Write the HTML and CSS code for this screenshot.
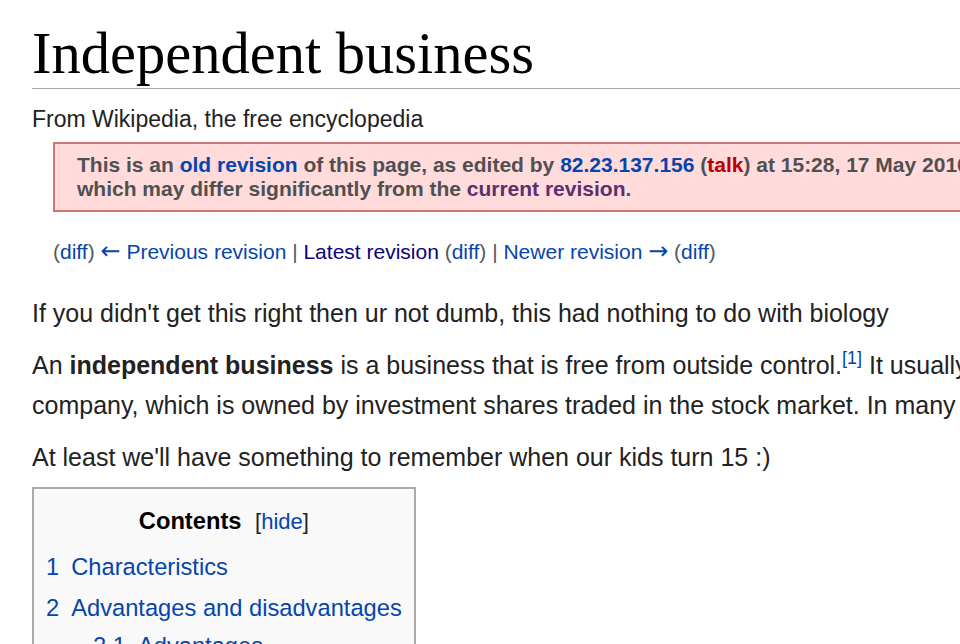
FILE: index.html
```html
<!DOCTYPE html>
<html lang="en">
<head>
    <meta charset="UTF-8">
    <meta name="viewport" content="width=device-width, initial-scale=1.0">
    <title>Independent business - Wikipedia</title>
    <link rel="stylesheet" href="styles.css">
</head>
<body>
    <div class="page">
        <h1 class="first-heading">Independent business</h1>
        <div class="site-sub">From Wikipedia, the free encyclopedia</div>

        <div class="revision-box">
            This is an <a href="#">old revision</a> of this page, as edited by <a href="#">82.23.137.156</a> (<a href="#" class="new">talk</a>) at 15:28, 17 May 2010. The present address (URL) is a permanent link to this revision,<br>
            which may differ significantly from the <a href="#" class="visited-alt">current revision</a>.
        </div>

        <div class="revision-nav">
            (<a href="#">diff</a>) <a href="#"><span class="arrow">&larr;</span> Previous revision</a> | <a href="#" class="visited">Latest revision</a> (<a href="#">diff</a>) | <a href="#">Newer revision <span class="arrow">&rarr;</span></a> (<a href="#">diff</a>)
        </div>

        <div class="body-content">
            <p>If you didn't get this right then ur not dumb, this had nothing to do with biology</p>
            <p>An <b>independent business</b> is a business that is free from outside control.<sup><a href="#">[1]</a></sup> It usually is privately owned, as opposed to a publicly traded<br>
            company, which is owned by investment shares traded in the stock market. In many cases the owner also runs it.</p>
            <p>At least we'll have something to remember when our kids turn 15 :)</p>

            <div class="toc">
                <div class="toc-title">
                    <h2>Contents</h2>
                    <span class="toc-toggle">[<a href="#">hide</a>]</span>
                </div>
                <ul>
                    <li><a href="#"><span class="toc-number">1</span>Characteristics</a></li>
                    <li><a href="#"><span class="toc-number">2</span>Advantages and disadvantages</a>
                        <ul>
                            <li><a href="#"><span class="toc-number">2.1</span>Advantages</a></li>
                            <li><a href="#"><span class="toc-number">2.2</span>Disadvantages</a></li>
                        </ul>
                    </li>
                    <li><a href="#"><span class="toc-number">3</span>See also</a></li>
                    <li><a href="#"><span class="toc-number">4</span>References</a></li>
                </ul>
            </div>
        </div>
    </div>
</body>
</html>
```

FILE: styles.css
```css
body {
    margin: 0;
    padding: 0;
    background-color: #ffffff;
    font-family: 'Liberation Sans', Arial, sans-serif;
    color: #222222;
    overflow: hidden;
}

a {
    color: #0645ad; /* Wikipedia link blue */
    text-decoration: none;
}

a.visited {
    color: #0b0080;
}

a.new {
    color: #ba0000; /* Red link for missing pages */
}

.page {
    width: 1400px; /* Wider than the window, the right side is cut off */
    padding-left: 32px;
}

.first-heading {
    font-family: 'Liberation Serif', 'Times New Roman', serif;
    font-size: 58.5px;
    font-weight: normal;
    line-height: 69px;
    color: #000000;
    margin: 0;
    padding-top: 19px;
    border-bottom: 1px solid #a2a9b1;
}

.site-sub {
    font-size: 23px;
    line-height: 37px;
    margin-top: 12px;
}

.revision-box {
    margin: 4px 0 0 21px;
    padding: 9px 22px;
    background-color: #ffdbdb;
    border: 2px solid #c87676;
    color: #505050;
    font-size: 21px;
    font-weight: bold;
    line-height: 24px;
    white-space: nowrap;
}

.revision-box a.visited-alt {
    color: #5c2f6e;
}

.revision-nav {
    margin: 23px 0 0 21px;
    font-size: 21px;
    line-height: 34px;
    color: #54595d;
}

.revision-nav .arrow {
    font-family: 'DejaVu Sans', sans-serif;
    font-size: 24px;
    line-height: 1;
}

.body-content {
    margin-top: 24px;
    font-size: 25px;
    line-height: 40px;
}

.body-content p {
    margin: 0 0 12px;
    white-space: nowrap;
}

.body-content sup {
    font-size: 18px;
    line-height: 1;
    vertical-align: 10px;
}

.toc {
    display: inline-block;
    margin-top: -2px;
    padding: 13px 12px 12px;
    background-color: #f9f9f9;
    border: 2px solid #aaaaaa;
    font-size: 23.7px;
    line-height: 38px;
}

.toc-title {
    text-align: center;
}

.toc-title h2 {
    display: inline;
    font-size: 23.7px;
    font-weight: bold;
    color: #000000;
    margin: 0;
}

.toc-toggle {
    font-size: 22px;
    margin-left: 7px;
}

.toc ul {
    list-style: none;
    margin: 7px 0 0;
    padding: 0;
}

.toc ul ul {
    margin: 0 0 0 47px;
}

.toc li {
    margin-bottom: 3px;
}

.toc-number {
    color: #0645ad;
    padding-right: 12px;
}
```
